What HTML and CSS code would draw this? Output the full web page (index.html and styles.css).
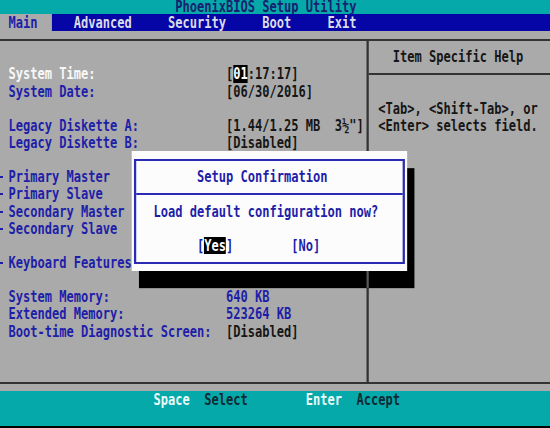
FILE: index.html
```html
<!DOCTYPE html>
<html lang="en">
<head>
<meta charset="utf-8">
<title>PhoenixBIOS Setup Utility</title>
<link rel="stylesheet" href="styles.css">
</head>
<body>
<div class="screen">
  <header class="title"><span class="title-text">PhoenixBIOS Setup Utility</span></header>

  <nav class="menu">
    <span class="tab active">Main</span>
    <span class="tab">Advanced</span>
    <span class="tab">Security</span>
    <span class="tab">Boot</span>
    <span class="tab">Exit</span>
  </nav>

  <main class="body">
    <div class="frame">
      <section class="fields">
        <div class="group">
          <div class="row current"><span class="label">System Time:</span><span class="value">[<span class="hl">01</span>:17:17]</span></div>
          <div class="row"><span class="label">System Date:</span><span class="value">[06/30/2016]</span></div>
        </div>
        <div class="group">
          <div class="row"><span class="label">Legacy Diskette A:</span><span class="value">[1.44/1.25 MB  3½"]</span></div>
          <div class="row"><span class="label">Legacy Diskette B:</span><span class="value">[Disabled]</span></div>
        </div>
        <div class="group">
          <div class="row sub"><span class="label">Primary Master</span></div>
          <div class="row sub"><span class="label">Primary Slave</span></div>
          <div class="row sub"><span class="label">Secondary Master</span></div>
          <div class="row sub"><span class="label">Secondary Slave</span></div>
        </div>
        <div class="group">
          <div class="row sub"><span class="label">Keyboard Features</span></div>
        </div>
        <div class="group">
          <div class="row"><span class="label">System Memory:</span><span class="value info">640 KB</span></div>
          <div class="row"><span class="label">Extended Memory:</span><span class="value info">523264 KB</span></div>
          <div class="row"><span class="label">Boot-time Diagnostic Screen:</span><span class="value">[Disabled]</span></div>
        </div>
      </section>

      <aside class="help">
        <h2>Item Specific Help</h2>
        <p>&lt;Tab&gt;, &lt;Shift-Tab&gt;, or<br>&lt;Enter&gt; selects field.</p>
      </aside>
    </div>
  </main>

  <footer class="keys">
    <span class="pair"><span class="key">Space</span><span class="act">Select</span></span>
    <span class="pair"><span class="key">Enter</span><span class="act">Accept</span></span>
  </footer>

  <div class="dialog" role="dialog" aria-label="Setup Confirmation">
    <div class="dialog-box">
      <h3 class="dialog-title">Setup Confirmation</h3>
      <p class="dialog-text">Load default configuration now?</p>
      <div class="dialog-buttons">
        <span class="btn">[<span class="hl">Yes</span>]</span>
        <span class="btn">[No]</span>
      </div>
    </div>
  </div>
</div>
</body>
</html>
```

FILE: styles.css
```css
/* 80x25 text-mode screen: one character cell is 1ch wide and one --r tall.
   The whole screen is laid out with a square-ish monospace font and then
   squeezed horizontally to get the tall, narrow VGA glyph shape. */
:root {
  --r: 17.15px;
  --gray: #aaaaaa;
  --teal: #06a9a9;
  --bar: #0606a6;
  --blue: #1e1ea8;
  --ink: #161616;
  --white: #f8f8f8;
  --rule: #333333;
}

* {
  box-sizing: border-box;
  margin: 0;
  padding: 0;
}

html,
body {
  background: #000;
  overflow: hidden;
}

body {
  width: 550px;
  height: 428px;
}

.screen {
  position: relative;
  width: 730.8px;
  height: 425.6px;
  overflow: hidden;
  transform: scaleX(0.7526);
  transform-origin: 0 0;
  font: bold 16px/17.15px "DejaVu Sans Mono", monospace;
  display: flex;
  flex-direction: column;
}

/* title row */
.title {
  flex: none;
  height: 14px;
  overflow: hidden;
  background: var(--teal);
  color: #182070;
  padding-left: 24.17ch;
  display: flex;
  align-items: flex-start;
}

.title-text {
  display: block;
  height: 14px;
  line-height: 14px;
  padding-top: 0;
}

/* menu row */
.menu {
  flex: none;
  height: var(--r);
  background: var(--bar);
  color: #dcdce6;
  display: flex;
  gap: 5ch;
}

.tab.active {
  background: var(--gray);
  color: var(--blue);
  padding: 0 2ch 0 1.17ch;
  margin-right: -2ch;
}

/* main body */
.body {
  flex: none;
  height: calc(var(--r) * 21);
  background: var(--gray);
  padding-top: calc(var(--r) / 2 - 1px);
}

.frame {
  height: calc(var(--r) * 20 + 2px);
  border-top: 2px solid var(--rule);
  border-bottom: 2px solid var(--rule);
  padding-top: calc(var(--r) / 2 - 1px);
  display: grid;
  grid-template-columns: calc(50.67ch + 1.5px) 1fr;
}

.fields {
  border-right: 3px solid var(--rule);
  margin-top: calc(1px - var(--r) / 2);
  padding-top: calc(var(--r) * 1.5 - 1px);
  display: flex;
  flex-direction: column;
  gap: var(--r);
}

.row {
  position: relative;
  display: grid;
  grid-template-columns: 30ch auto;
  padding-left: 1.17ch;
  height: var(--r);
  color: var(--blue);
  white-space: pre;
}

.row.current .label {
  color: var(--white);
}

.row.sub::before {
  content: "";
  position: absolute;
  left: 0;
  top: 8px;
  width: 4px;
  height: 2px;
  background: var(--blue);
}

.value {
  color: var(--ink);
}

.value.info {
  color: var(--blue);
}

.hl {
  display: inline-block;
  height: var(--r);
  vertical-align: top;
  background: #000;
  color: #fff;
}

/* help column */
.help {
  color: var(--ink);
}

.help h2 {
  font: inherit;
  padding-left: calc(3.5ch - 1.5px);
  padding-bottom: calc(var(--r) / 2 - 1px);
  border-bottom: 2px solid var(--rule);
}

.help p {
  margin-top: calc(var(--r) * 1.5 - 1px);
  padding-left: calc(1.5ch - 1.5px);
}

/* key legend */
.keys {
  flex: none;
  height: calc(var(--r) * 2);
  background: var(--teal);
  display: flex;
  gap: 8ch;
  padding-left: 21.17ch;
}

.pair {
  display: flex;
  gap: 2ch;
  height: var(--r);
}

.key {
  color: #eafafa;
}

.act {
  color: #0e2a36;
}

/* confirmation box */
.dialog {
  position: absolute;
  left: 18.17ch;
  top: calc(14px + var(--r) * 8);
  width: 38ch;
  height: calc(var(--r) * 7);
  background: #fcfcfc;
  box-shadow: 1ch var(--r) 0 #000;
  padding: calc(var(--r) / 2 - 1px) calc(0.5ch - 1.5px);
  color: var(--blue);
}

/* the panel divider shows through the shadow row */
.dialog::after {
  content: "";
  position: absolute;
  left: calc(32.5ch - 1.5px);
  top: 100%;
  width: 3px;
  height: var(--r);
  background: #585858;
}

.dialog-box {
  height: calc(var(--r) * 6 + 2px);
  border: 2px solid #2a2ab4;
  border-left-width: 3px;
  border-right-width: 3px;
  padding-top: calc(var(--r) / 2 - 1px);
}

.dialog-title {
  font: inherit;
  padding-left: calc(8.5ch - 1.5px);
  padding-bottom: calc(var(--r) / 2 - 1px);
  border-bottom: 2px solid #2a2ab4;
}

.dialog-text {
  margin-top: calc(var(--r) / 2 - 1px);
  padding-left: calc(2.5ch - 1.5px);
}

.dialog-buttons {
  margin-top: var(--r);
  padding-left: calc(8.5ch - 1.5px);
  display: flex;
  gap: 8ch;
  height: var(--r);
}
```
